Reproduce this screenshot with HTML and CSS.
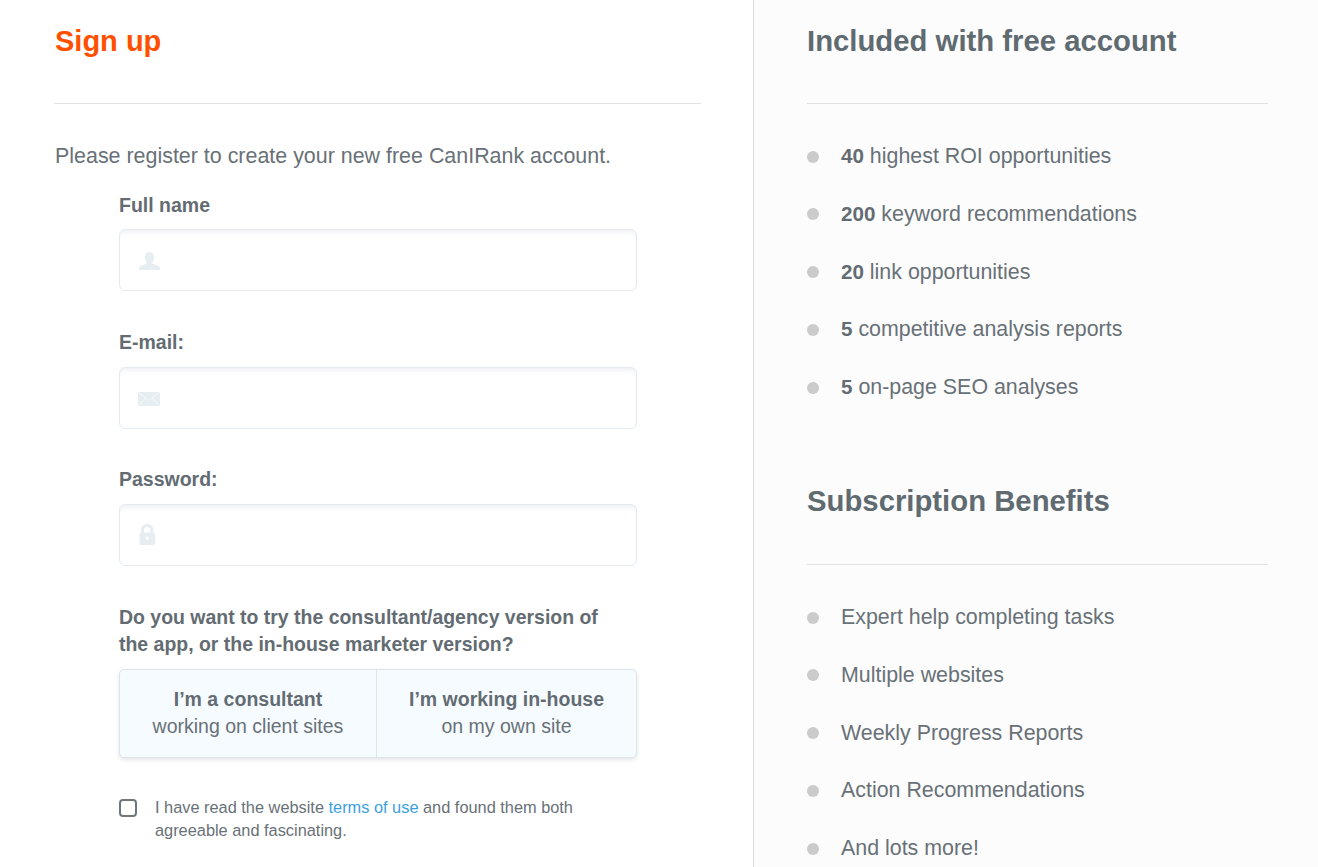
FILE: index.html
```html
<!DOCTYPE html>
<html lang="en">
<head>
<meta charset="utf-8">
<title>Sign up</title>
<link rel="stylesheet" href="styles.css">
</head>
<body>
<div class="page">
  <main class="left">
    <h1 class="title title-accent">Sign up</h1>
    <hr class="rule">
    <p class="intro">Please register to create your new free CanIRank account.</p>
    <form class="form">
      <label class="label">Full name</label>
      <div class="input">
        <svg class="icon" width="24" height="20" viewBox="0 0 24 20"><path d="M11.500 2C8.500 2 7 4.500 7 7.500c0 2 .8 3.600 1.600 4.600v1.600C6.500 14.600 1 15.500 1 18v2h21v-2c0-2.500-5.500-3.400-7.600-4.300v-1.600c.8-1 1.600-2.600 1.600-4.600C16 4.500 14.500 2 11.500 2z"/></svg>
      </div>
      <label class="label">E-mail:</label>
      <div class="input">
        <svg class="icon" width="24" height="20" viewBox="0 0 24 20"><rect x="0" y="4" width="22" height="14" rx="1.500"/><path class="icon-cut" d="M1 5l10 7.500L21 5M1 17l6.800-7M21 17l-6.800-7"/></svg>
      </div>
      <label class="label">Password:</label>
      <div class="input">
        <svg class="icon" width="24" height="22" viewBox="0 0 24 22"><path fill-rule="evenodd" d="M3 8.500V6.300C3 2.500 5.600 0 9.250 0s6.250 2.500 6.250 6.300v2.200c.9.200 1.500.9 1.500 1.800v8.700c0 1.200-.8 2-2 2H3.500c-1.200 0-2-.8-2-2v-8.700c0-.9.600-1.600 1.500-1.800zm3 0h6.500V6.300c0-2-1.300-3.400-3.250-3.400S6 4.300 6 6.300zm3.250 4a1.700 1.700 0 1 0 0 3.400 1.700 1.700 0 0 0 0-3.400z"/></svg>
      </div>
      <p class="question">Do you want to try the consultant/agency version of the app, or the in-house marketer version?</p>
      <div class="toggle">
        <div class="choice choice-first"><strong>I’m a consultant</strong><span>working on client sites</span></div>
        <div class="choice"><strong>I’m working in-house</strong><span>on my own site</span></div>
      </div>
      <div class="terms">
        <span class="box"></span>
        <p class="terms-text">I have read the website <a href="#">terms of use</a> and found them both agreeable and fascinating.</p>
      </div>
    </form>
  </main>
  <aside class="right">
    <h2 class="title">Included with free account</h2>
    <hr class="rule">
    <ul class="list">
      <li><b>40</b> highest ROI opportunities</li>
      <li><b>200</b> keyword recommendations</li>
      <li><b>20</b> link opportunities</li>
      <li><b>5</b> competitive analysis reports</li>
      <li><b>5</b> on-page SEO analyses</li>
    </ul>
    <h2 class="title title-second">Subscription Benefits</h2>
    <hr class="rule">
    <ul class="list list-second">
      <li>Expert help completing tasks</li>
      <li>Multiple websites</li>
      <li>Weekly Progress Reports</li>
      <li>Action Recommendations</li>
      <li>And lots more!</li>
    </ul>
  </aside>
</div>
</body>
</html>
```
FILE: styles.css
```css
* { box-sizing: border-box; }
html, body { margin: 0; height: 100%; overflow: hidden; background: #fff; }
body { font-family: "Liberation Sans", Arial, sans-serif; color: #687177; }

.page { display: flex; height: 867px; }
.left { width: 754px; flex: none; padding: 0 52px 0 54px; border-right: 1px solid #d9d9d9; background: #fff; }
.right { flex: 1; padding: 0 50px 0 53px; background: #fcfcfc; }

.title { margin: 0; padding-top: 24px; height: 103px; font-size: 29.3px; line-height: 34px; font-weight: 700; color: #5f6b71; }
.title-accent { padding-left: 1px; font-size: 29px; color: #ff5000; }
.title-second { height: 104px; margin-top: 29px; }
.rule { margin: 0; height: 1px; border: 0; background: #e2e2e2; }

.intro { margin: 0; padding: 38px 0 0 1px; font-size: 21.43px; line-height: 28px; }

.form { padding: 0 64px 0 65px; }
.label { display: block; height: 38px; padding-top: 1.25px; font-size: 19.5px; line-height: 24px; font-weight: 700; color: #636c72; }
.label:first-child { margin-top: 21px; padding-top: 2px; }
.input { display: flex; align-items: center; height: 62px; margin-bottom: 37.5px; padding-left: 18px; border: 1px solid #e3ebf1; border-radius: 6px; background: #fff; box-shadow: inset 0 5px 5px -3px rgba(120, 140, 155, .14); }
.icon { display: block; fill: #e7eef2; }
.icon-cut { fill: none; stroke: #f6f9fa; stroke-width: 1; }

.question { max-width: 495px; margin: 0; font-size: 19.47px; line-height: 27px; font-weight: 700; color: #636c72; }
.toggle { display: flex; height: 89px; margin-top: 11.5px; border: 1px solid #dde5ea; border-radius: 5px; background: #f6fbff; box-shadow: 0 2px 4px rgba(80, 100, 115, .16); }
.choice { flex: 1; display: flex; flex-direction: column; align-items: center; justify-content: center; padding-bottom: 2px; font-size: 19.5px; line-height: 27px; text-align: center; }
.choice-first { flex: none; width: 256px; }
.choice + .choice { border-left: 1px solid #dde5ea; }
.choice strong { font-weight: 700; color: #636c72; }

.terms { display: flex; gap: 18px; margin-top: 37.5px; }
.box { flex: none; width: 18px; height: 18px; margin-top: 3.5px; border: 2px solid #70777c; border-radius: 4px; background: #fff; }
.terms-text { margin: 0; font-size: 16.35px; line-height: 23.5px; }
.terms-text a { color: #3b9fe0; text-decoration: none; }

.list { list-style: none; margin: 0; padding: 38px 0 0; }
.list-second { margin-top: .3px; }
.list li { position: relative; height: 57.75px; padding-left: 34px; font-size: 21.4px; line-height: 28px; }
.list li::before { content: ""; position: absolute; left: 0; top: 8.5px; width: 12px; height: 12px; border-radius: 50%; background: #cbcbcb; }
.list b { font-size: 20.6px; font-weight: 700; color: #636c72; }
```
